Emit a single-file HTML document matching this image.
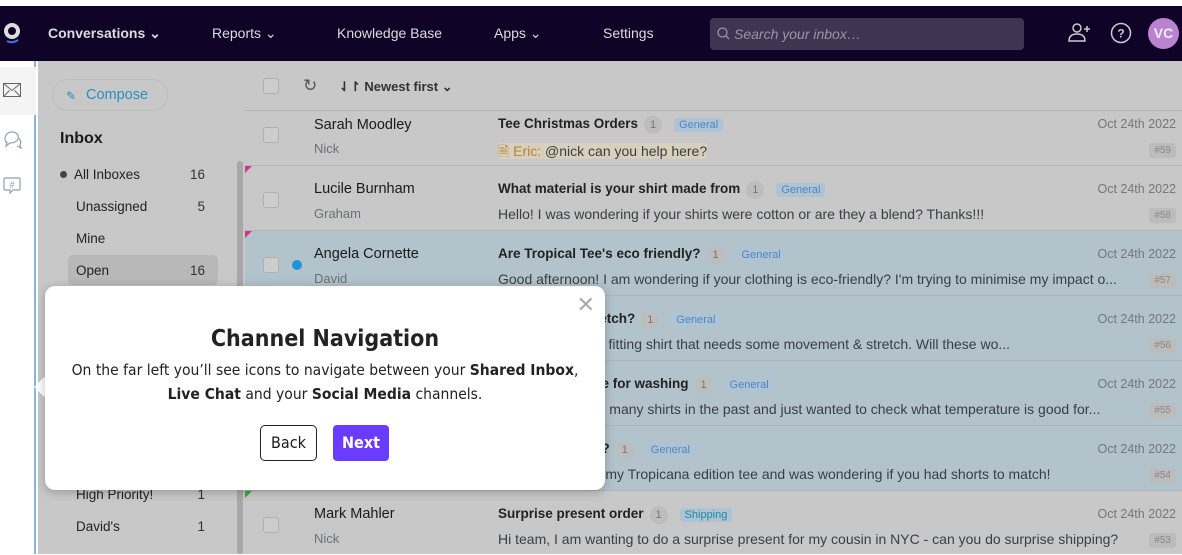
<!DOCTYPE html>
<html><head><meta charset="utf-8"><style>
*{box-sizing:border-box;margin:0;padding:0}
body{width:1182px;height:554px;overflow:hidden;background:#fff;font-family:"Liberation Sans",sans-serif;position:relative;color:#1a1a1a}
.top{position:absolute;left:0;top:6px;width:1182px;height:55px;background:#0f0328;color:#dcdcdc;font-size:14px;font-weight:bold}
.top span{position:absolute;top:19px}
.search{position:absolute;left:710px;top:12px;width:314px;height:32px;background:#3f3553;border-radius:4px;color:#9a94a6;font-style:italic;font-weight:normal;font-size:14px;padding:8px 0 0 24px}
.rail{position:absolute;left:0;top:61px;width:36px;height:493px;background:#fff;border-right:2px solid #8ab4e0}
.side{position:absolute;left:38px;top:61px;width:207px;height:493px;background:#c8c8c8}
.list{position:absolute;left:245px;top:61px;width:937px;height:493px;background:#c8c8c8}
.row{position:absolute;left:0;width:937px;height:65px;border-top:1px solid #b4b4b4}
.hl{background:#b3c3cb}
.cb{position:absolute;left:18px;width:16px;height:16px;border:1px solid #b0b0b0;border-radius:3px;background:#cdcdcd}
.nm{position:absolute;left:69px;top:5px;font-size:14.5px}
.ag{position:absolute;left:69px;top:30px;font-size:13px;color:#6b7078}
.sb{position:absolute;left:253px;top:5px;font-size:13.5px;font-weight:bold;color:#222}
.pv{position:absolute;left:253px;top:30px;font-size:14px;color:#3a3e44;white-space:nowrap}
.n1{display:inline-block;width:18px;height:18px;border-radius:9px;background:#bdbdbd;color:#777;font-size:11px;text-align:center;line-height:18px;font-weight:normal;margin:0 12px 0 6px}
.tag{display:inline-block;background:#aec4d4;color:#4f86c2;font-size:11px;padding:1px 5px;border-radius:3px;font-weight:normal}
.dt{position:absolute;right:6px;top:6px;font-size:12.5px;color:#777}
.id{position:absolute;right:6px;top:32px;font-size:10px;color:#888;background:#bcbcbc;padding:2px 5px;border-radius:3px}
.tri{position:absolute;left:0;top:0;width:0;height:0;border-top:7px solid #c73c8a;border-right:7px solid transparent}
.sitem{position:absolute;left:38px;font-size:13.5px;color:#222}
.cnt{position:absolute;right:40px;font-size:13.5px;color:#333}
.tip{position:absolute;left:45px;top:286px;width:560px;height:204px;background:#fff;border-radius:10px;box-shadow:0 2px 10px rgba(0,0,0,.25);text-align:center;font-family:"DejaVu Sans Condensed","Liberation Sans Narrow","Liberation Sans",sans-serif}
</style></head><body>
<div class="top">
<svg style="position:absolute;left:4px;top:17px" width="18" height="22" viewBox="0 0 18 22"><circle cx="8" cy="8" r="6" fill="none" stroke="#ddd" stroke-width="4"/><path d="M3 18q5 3 11-1" stroke="#4a6cf0" stroke-width="2" fill="none"/></svg>
<span style="left:48px">Conversations ⌄</span>
<span style="left:212px;font-weight:normal">Reports ⌄</span>
<span style="left:337px;font-weight:normal">Knowledge Base</span>
<span style="left:494px;font-weight:normal">Apps ⌄</span>
<span style="left:603px;font-weight:normal">Settings</span>
<div class="search">Search your inbox…<svg style="position:absolute;left:7px;top:9px" width="13" height="13" viewBox="0 0 13 13"><circle cx="5.5" cy="5.5" r="4.5" fill="none" stroke="#9a94a6" stroke-width="1.3"/><path d="M9 9l3 3" stroke="#9a94a6" stroke-width="1.3"/></svg></div>
<svg style="position:absolute;left:1067px;top:16px" width="24" height="22" viewBox="0 0 24 22"><circle cx="10" cy="6" r="4" fill="none" stroke="#ccc" stroke-width="1.5"/><path d="M2 19q0-7 8-7t8 7z" fill="none" stroke="#ccc" stroke-width="1.5"/><path d="M17 7h6M20 4v6" stroke="#ccc" stroke-width="1.5"/></svg>
<svg style="position:absolute;left:1110px;top:16px" width="22" height="22" viewBox="0 0 22 22"><circle cx="11" cy="11" r="9.5" fill="none" stroke="#ccc" stroke-width="1.5"/><text x="11" y="15.5" font-size="12" fill="#ccc" text-anchor="middle" font-family="Liberation Sans">?</text></svg>
<div style="position:absolute;left:1148px;top:12px;width:31px;height:31px;border-radius:50%;background:#b983d0;color:#eee;font-size:14px;text-align:center;line-height:31px">VC</div>
</div>
<div class="rail">
<div style="position:absolute;left:0;top:6px;width:36px;height:48px;background:#f4f4f4"></div>
<svg style="position:absolute;left:3px;top:22px" width="18" height="14" viewBox="0 0 18 14"><rect x=".5" y=".5" width="17" height="13" fill="none" stroke="#666"/><path d="M.5 .5l8.5 7 8.5-7M.5 13.5l6-6M17.5 13.5l-6-6" stroke="#666" fill="none"/></svg>
<svg style="position:absolute;left:3px;top:69px" width="20" height="20" viewBox="0 0 20 20"><path d="M3 12q-2-3 0-7 4-5 10-2 3 2 2 6-2 4-8 4l-4 3 1-4z" fill="none" stroke="#8fa0b3" stroke-width="1.2"/><path d="M15 8q4 2 2 7l1 3-4-2" fill="none" stroke="#8fa0b3" stroke-width="1.2"/></svg>
<svg style="position:absolute;left:3px;top:116px" width="18" height="18" viewBox="0 0 18 18"><path d="M2 1h14q1 0 1 1v10q0 1-1 1h-6l-3 3v-3H2q-1 0-1-1V2q0-1 1-1z" fill="none" stroke="#8fa0b3" stroke-width="1.2"/><text x="9" y="11" font-size="9" fill="#8fa0b3" text-anchor="middle" font-family="Liberation Sans">#</text></svg>
</div>
<div class="side">
<div style="position:absolute;left:14px;top:18px;width:116px;height:32px;border:1px solid #bdbdbd;border-radius:16px;color:#2c8dc4;font-size:14.5px;padding:7px 0 0 33px">Compose</div>
<div style="position:absolute;left:28px;top:28px;color:#2c8dc4;font-size:12px">✎</div>
<div style="position:absolute;left:22px;top:69px;font-size:16px;font-weight:bold">Inbox</div>
<div style="position:absolute;left:22px;top:110px;width:7px;height:7px;border-radius:50%;background:#444"></div>
<div class="sitem" style="left:36px;top:106px">All Inboxes</div><div class="cnt" style="top:106px">16</div>
<div class="sitem" style="top:138px">Unassigned</div><div class="cnt" style="top:138px">5</div>
<div class="sitem" style="top:170px">Mine</div>
<div style="position:absolute;left:30px;top:194px;width:150px;height:30px;background:#b8b8b8;border-radius:5px"></div>
<div class="sitem" style="top:202px">Open</div><div class="cnt" style="top:202px">16</div>
<div class="sitem" style="top:426px">High Priority!</div><div class="cnt" style="top:426px">1</div>
<div class="sitem" style="top:458px">David's</div><div class="cnt" style="top:458px">1</div>
<div style="position:absolute;left:199px;top:100px;width:6px;height:393px;background:#a8a8a8;border-radius:3px"></div>
</div>
<div class="list">
<div class="cb" style="top:17px"></div>
<div style="position:absolute;left:58px;top:15px;font-size:17px;color:#555">↻</div>
<div style="position:absolute;left:94px;top:18px;font-size:13px;color:#333;font-weight:bold">⇃↾ Newest first ⌄</div>
<div class="row" style="top:49px;height:55px"><div class="cb" style="top:16px"></div><div class="nm" style="top:6px">Sarah Moodley</div><div class="ag" style="top:30px">Nick</div><div class="sb" style="top:5px">Tee Christmas Orders<span class="n1">1</span><span class="tag">General</span></div><div class="pv"><span style="background:#d8d0bc;color:#b8843a">🗎 Eric:</span><span style="background:#d8d0bc"> @nick can you help here?</span></div><div class="dt">Oct 24th 2022</div><div class="id">#59</div></div>
<div class="row" style="top:104px"><div class="tri"></div><div class="cb" style="top:26px"></div><div class="nm" style="top:15px">Lucile Burnham</div><div class="ag" style="top:40px">Graham</div><div class="sb" style="top:15px">What material is your shirt made from<span class="n1">1</span><span class="tag">General</span></div><div class="pv" style="top:40px">Hello! I was wondering if your shirts were cotton or are they a blend? Thanks!!!</div><div class="dt" style="top:16px">Oct 24th 2022</div><div class="id" style="top:42px">#58</div></div>
<div class="row hl" style="top:169px"><div class="tri"></div><div class="cb" style="top:26px"></div><div style="position:absolute;left:47px;top:29px;width:10px;height:10px;border-radius:50%;background:#1f95d6"></div><div class="nm" style="top:15px">Angela Cornette</div><div class="ag" style="top:40px">David</div><div class="sb" style="top:15px">Are Tropical Tee's eco friendly?<span class="n1">1</span><span class="tag">General</span></div><div class="pv" style="top:40px">Good afternoon! I am wondering if your clothing is eco-friendly? I'm trying to minimise my impact o...</div><div class="dt" style="top:16px">Oct 24th 2022</div><div class="id" style="top:42px">#57</div></div>
<div class="row hl" style="top:234px"><div class="sb" style="top:15px">Does the tee stretch?<span class="n1">1</span><span class="tag">General</span></div><div class="pv" style="top:40px">I need an athletic fitting shirt that needs some movement &amp; stretch. Will these wo...</div><div class="dt" style="top:16px">Oct 24th 2022</div><div class="id" style="top:42px">#56</div></div>
<div class="row hl" style="top:299px"><div class="sb" style="top:15px">Best temperature for washing<span class="n1">1</span><span class="tag">General</span></div><div class="pv" style="top:40px">I have shrunk too many shirts in the past and just wanted to check what temperature is good for...</div><div class="dt" style="top:16px">Oct 24th 2022</div><div class="id" style="top:42px">#55</div></div>
<div class="row hl" style="top:364px"><div class="sb" style="top:15px">Shorts available?<span class="n1">1</span><span class="tag">General</span></div><div class="pv" style="top:40px">I recently got the my Tropicana edition tee and was wondering if you had shorts to match!</div><div class="dt" style="top:16px">Oct 24th 2022</div><div class="id" style="top:42px">#54</div></div>
<div class="row" style="top:429px"><div class="tri" style="border-top-color:#3caa3c"></div><div class="cb" style="top:26px"></div><div class="nm" style="top:15px">Mark Mahler</div><div class="ag" style="top:40px">Nick</div><div class="sb" style="top:15px">Surprise present order<span class="n1">1</span><span class="tag" style="color:#1a8aa8">Shipping</span></div><div class="pv" style="top:40px">Hi team, I am wanting to do a surprise present for my cousin in NYC - can you do surprise shipping?</div><div class="dt" style="top:16px">Oct 24th 2022</div><div class="id" style="top:42px">#53</div></div>
</div>
<div style="position:absolute;left:37px;top:380px;width:14px;height:14px;background:#fff;transform:rotate(45deg)"></div>
<div class="tip">
<div style="position:absolute;right:10px;top:6px;font-size:22px;color:#aaa;font-family:'Liberation Sans'">✕</div>
<div style="margin-top:40px;font-size:23px;font-weight:bold;color:#222">Channel Navigation</div>
<div style="margin-top:6px;font-size:15.5px;line-height:24px;color:#222">On the far left you’ll see icons to navigate between your <b>Shared Inbox</b>,<br><b>Live Chat</b> and your <b>Social Media</b> channels.</div>
<div style="position:absolute;left:215px;top:139px;width:57px;height:36px;border:1px solid #222;border-radius:5px;font-size:16px;line-height:34px">Back</div>
<div style="position:absolute;left:288px;top:139px;width:56px;height:36px;background:#6a3cff;border-radius:4px;font-size:16px;line-height:36px;color:#fff;font-weight:bold">Next</div>
</div>
</body></html>
